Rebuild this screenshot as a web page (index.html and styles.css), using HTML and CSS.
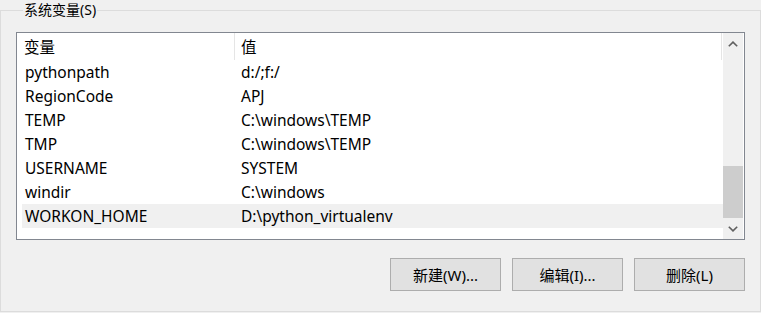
FILE: index.html
```html
<!DOCTYPE html>
<html lang="zh-CN">
<head>
<meta charset="utf-8">
<title>系统变量</title>
<link rel="stylesheet" href="styles.css">
</head>
<body>
<fieldset class="group">
  <legend class="group-title">系统变量(S)</legend>
  <div class="listbox">
    <div class="list">
      <div class="list-header">
        <div class="hcol hcol-name">变量</div>
        <div class="hcol hcol-value">值</div>
      </div>
      <div class="row"><span class="c-name">pythonpath</span><span class="c-value">d:/;f:/</span></div>
      <div class="row"><span class="c-name">RegionCode</span><span class="c-value">APJ</span></div>
      <div class="row"><span class="c-name">TEMP</span><span class="c-value">C:\windows\TEMP</span></div>
      <div class="row"><span class="c-name">TMP</span><span class="c-value">C:\windows\TEMP</span></div>
      <div class="row"><span class="c-name">USERNAME</span><span class="c-value">SYSTEM</span></div>
      <div class="row"><span class="c-name">windir</span><span class="c-value">C:\windows</span></div>
      <div class="row row-selected"><span class="c-name">WORKON_HOME</span><span class="c-value">D:\python_virtualenv</span></div>
    </div>
    <div class="scrollbar">
      <div class="sb-btn">
        <svg width="10" height="6" viewBox="0 0 10 6"><polyline points="0.8,5.3 5,1.1 9.2,5.3" fill="none" stroke="#606060" stroke-width="1.6"/></svg>
      </div>
      <div class="sb-track"><div class="sb-thumb"></div></div>
      <div class="sb-btn">
        <svg width="10" height="6" viewBox="0 0 10 6"><polyline points="0.8,0.7 5,4.9 9.2,0.7" fill="none" stroke="#606060" stroke-width="1.6"/></svg>
      </div>
    </div>
  </div>
  <div class="buttons">
    <button class="btn">新建(W)...</button>
    <button class="btn">编辑(I)...</button>
    <button class="btn">删除(L)</button>
  </div>
</fieldset>
</body>
</html>
```

FILE: styles.css
```css
html, body {
  margin: 0;
  padding: 0;
  background: #f0f0f0;
}
body {
  font-family: "Noto Sans", "Noto Sans CJK SC", sans-serif;
  color: #000;
  width: 761px;
  height: 313px;
  overflow: hidden;
}
.group {
  margin: 0;
  width: 761px;
  height: 312px;
  box-sizing: border-box;
  border: 1px solid #dcdcdc;
  padding: 12px 15px 0 15px;
  min-width: 0;
}
.group-title {
  font-size: 14px;
  line-height: 20px;
  height: 20px;
  padding: 0 1px;
  margin-left: 7px;
}
.listbox {
  display: flex;
  width: 729px;
  height: 208px;
  box-sizing: border-box;
  border: 1px solid #828790;
  background: #fff;
}
.list {
  width: 706px;
  display: flex;
  flex-direction: column;
  font-size: 15.5px;
}
.list-header {
  display: flex;
  height: 27px;
  flex: none;
}
.hcol {
  line-height: 28px;
  box-sizing: border-box;
  border-right: 1px solid #e5e5e5;
}
.hcol-name {
  width: 218px;
  padding-left: 7px;
}
.hcol-value {
  width: 487px;
  padding-left: 6px;
}
.row {
  display: flex;
  height: 24px;
  line-height: 24px;
  margin-left: 5px;
  flex: none;
}
.row-selected {
  background: #f0f0f0;
}
.c-name {
  width: 219px;
  padding-left: 3px;
  box-sizing: border-box;
}
.scrollbar {
  width: 20px;
  margin-right: 1px;
  background: #f0f0f0;
  display: flex;
  flex-direction: column;
}
.sb-btn {
  height: 21px;
  flex: none;
  display: flex;
  align-items: center;
  justify-content: center;
}
.sb-btn svg {
  display: block;
}
.sb-track {
  flex: 1;
  display: flex;
  flex-direction: column;
  justify-content: flex-end;
}
.sb-thumb {
  height: 52px;
  background: #cdcdcd;
}
.buttons {
  display: flex;
  justify-content: flex-end;
  gap: 11px;
  margin-top: 18px;
}
.btn {
  width: 111px;
  height: 33px;
  box-sizing: border-box;
  background: #e1e1e1;
  border: 1px solid #adadad;
  border-radius: 0;
  font-family: "Noto Sans", "Noto Sans CJK SC", sans-serif;
  font-size: 15px;
  color: #000;
  padding: 0;
  margin: 0;
}
```
